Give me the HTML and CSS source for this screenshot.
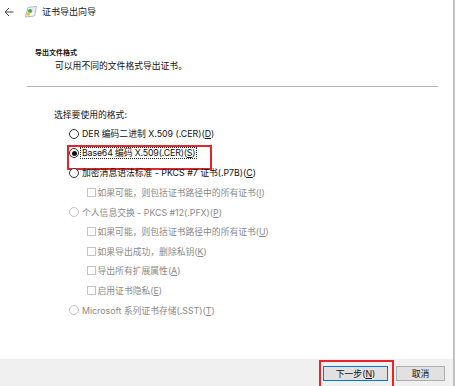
FILE: index.html
```html
<!DOCTYPE html>
<html lang="zh-CN">

<head>
    <meta charset="UTF-8">
    <meta name="viewport" content="width=device-width, initial-scale=1.0">
    <title>证书导出向导</title>

    <link rel="stylesheet" href="styles.css">
</head>

<body>
    <div class="window">
        <div class="titlebar">
            <svg class="back" width="10" height="10" viewBox="0 0 10 10">
                <path d="M9.5 5H1 M5 1L1 5l4 4" fill="none" stroke="#444" stroke-width="1" />
            </svg>
            <svg class="cert-icon" width="13" height="12" viewBox="0 0 13 12">
                <path d="M4 1.5L12.5 0.5L10.5 10L1.5 11Z" fill="#f6f7f9" stroke="#9aa8ba" stroke-width="0.8" />
                <path d="M5.5 3.5L10.5 3M5 5.5L9.8 5" stroke="#c9d2dd" stroke-width="0.8" />
                <circle cx="6" cy="5" r="2.1" fill="#3fb24a" />
                <circle cx="4.2" cy="8" r="1.7" fill="#f3c614" />
            </svg>
            <span class="title">证书导出向导</span>
        </div>

        <div class="intro">
            <div class="intro-title">导出文件格式</div>
            <div class="intro-text">可以用不同的文件格式导出证书。</div>
        </div>

        <div class="divider"></div>

        <div class="content">
            <div class="prompt">选择要使用的格式:</div>

            <div class="options">
                <div class="opt">
                    <span class="radio"></span>
                    <span>DER 编码二进制 X.509 (.CER)(<u>D</u>)</span>
                </div>
                <div class="opt marked">
                    <span class="radio checked"></span>
                    <span class="focus">Base64 编码 X.509(.CER)(<u>S</u>)</span>
                </div>
                <div class="opt">
                    <span class="radio"></span>
                    <span>加密消息语法标准 - PKCS #7 证书(.P7B)(<u>C</u>)</span>
                </div>
                <div class="opt sub disabled">
                    <span class="check"></span>
                    <span>如果可能，则包括证书路径中的所有证书(<u>I</u>)</span>
                </div>
                <div class="opt disabled">
                    <span class="radio"></span>
                    <span>个人信息交换 - PKCS #12(.PFX)(<u>P</u>)</span>
                </div>
                <div class="opt sub disabled">
                    <span class="check"></span>
                    <span>如果可能，则包括证书路径中的所有证书(<u>U</u>)</span>
                </div>
                <div class="opt sub disabled">
                    <span class="check"></span>
                    <span>如果导出成功，删除私钥(<u>K</u>)</span>
                </div>
                <div class="opt sub disabled">
                    <span class="check"></span>
                    <span>导出所有扩展属性(<u>A</u>)</span>
                </div>
                <div class="opt sub disabled">
                    <span class="check"></span>
                    <span>启用证书隐私(<u>E</u>)</span>
                </div>
                <div class="opt disabled">
                    <span class="radio"></span>
                    <span>Microsoft 系列证书存储(.SST)(<u>T</u>)</span>
                </div>
            </div>
        </div>

        <div class="footer">
            <button class="btn primary">下一步(<u>N</u>)</button>
            <button class="btn">取消</button>
        </div>
    </div>
</body>

</html>
```

FILE: styles.css
```css
* {
    box-sizing: border-box;
}

body {
    margin: 0;
    background: #fff;
    font-family: Inter, "Noto Sans CJK SC", sans-serif;
    font-size: 8.8px;
    color: #111;
}

u {
    text-decoration-thickness: 1px;
    text-underline-offset: 1px;
}

.window {
    display: flex;
    flex-direction: column;
    width: 455px;
    height: 386px;
    border-right: 2px solid #c2c2c2;
}

.titlebar {
    display: flex;
    align-items: center;
    height: 24px;
    padding-left: 4px;
}

.back {
    display: block;
}

.cert-icon {
    display: block;
    margin-left: 10px;
}

.title {
    margin-left: 5px;
    font-size: 9px;
    line-height: 12px;
    color: #222;
}

.intro {
    padding: 23px 0 0 35px;
}

.intro-title {
    font-size: 7px;
    font-weight: bold;
    line-height: 12px;
}

.intro-text {
    padding-left: 20px;
    line-height: 13px;
}

.divider {
    height: 1px;
    margin: 14px 15px 0 27px;
    background: #b4b4b4;
}

.content {
    padding: 21px 0 0 54px;
}

.prompt {
    line-height: 14px;
}

.options {
    margin-top: 2px;
    padding-left: 15px;
}

.opt {
    position: relative;
    display: flex;
    align-items: center;
    gap: 3px;
    height: 19.6px;
}

.opt.sub {
    padding-left: 18px;
    gap: 1.5px;
}

.opt.disabled {
    color: #8a8a8a;
}

.radio {
    position: relative;
    flex: none;
    width: 10px;
    height: 10px;
    border: 1px solid #333;
    border-radius: 50%;
    background: #fff;
}

.disabled .radio {
    border-color: #c4c4c4;
}

.radio.checked::after {
    content: "";
    position: absolute;
    inset: 1.5px;
    border-radius: 50%;
    background: #111;
}

.check {
    flex: none;
    width: 9px;
    height: 9px;
    border: 1px solid #c4c4c4;
    background: #fff;
}

.focus {
    line-height: 10px;
    padding: 0 1px;
    margin-left: -1px;
    letter-spacing: -0.15px;
    outline: 1px dotted #222;
}

.marked::after {
    content: "";
    position: absolute;
    left: -2px;
    top: 1px;
    width: 141px;
    height: 21px;
    border: 2px solid #e3262c;
}

.footer {
    display: flex;
    justify-content: flex-end;
    gap: 8px;
    margin-top: auto;
    height: 27px;
    padding: 7px 8px 0 0;
    background: #f0f0f0;
}

.btn {
    all: unset;
    position: relative;
    height: 15px;
    width: 49px;
    font-family: inherit;
    font-size: 8.8px;
    line-height: 13px;
    text-align: center;
    color: #111;
    background: #e1e1e1;
    border: 1px solid #adadad;
    box-sizing: border-box;
}

.btn.primary {
    width: 65px;
    border-color: #0078d7;
}

.btn.primary::after {
    content: "";
    position: absolute;
    left: -5px;
    top: -7px;
    width: 71px;
    height: 24px;
    border: 2px solid #e3262c;
}
```
